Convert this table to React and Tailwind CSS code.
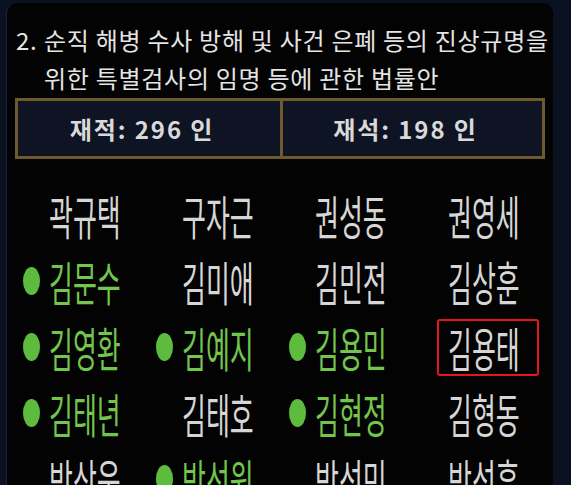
const rows = [
  [['곽규택'], ['구자근'], ['권성동'], ['권영세']],
  [['김문수', 'yes'], ['김미애'], ['김민전'], ['김상훈']],
  [['김영환', 'yes'], ['김예지', 'yes'], ['김용민', 'yes'], ['김용태', 'mark']],
  [['김태년', 'yes'], ['김태호'], ['김현정', 'yes'], ['김형동']],
  [['박상웅'], ['박선원', 'yes'], ['박성민'], ['박성훈']],
]

function NameCell({ name, state }) {
  const voted = state === 'yes'
  return (
    <div className="flex items-center h-[66px]">
      <span className="w-[26px] shrink-0 flex items-center">
        {voted && <span className="w-[17px] h-[28px] rounded-[50%] bg-[#5dbb3d]" />}
      </span>
      {state === 'mark' ? (
        <span className="-ml-[11px] w-[102px] h-[57px] border-2 border-[#e3161d] rounded-[3px] flex items-center pl-[9px]">
          <span className="inline-block scale-y-[1.8] text-[#d6d6d6]">{name}</span>
        </span>
      ) : (
        <span className={`inline-block scale-y-[1.8] ${voted ? 'text-[#72c64c]' : 'text-[#d6d6d6]'}`}>
          {name}
        </span>
      )}
    </div>
  )
}

export default function App() {
  return (
    <div className="w-[571px] h-[485px] overflow-hidden bg-[#0a1120] pl-[6px] pt-[3px] pr-[18px] font-['Noto_Sans_CJK_KR',sans-serif]">
      <div className="h-[600px] bg-[#030303] rounded-t-[10px] border-l border-[#1a2438]">
        <div className="flex pl-[9px] pt-[18px] text-[24px] leading-[38px] text-[#e4e4e4] tracking-[0.03em]">
          <span className="w-[28px] shrink-0">2.</span>
          <div>
            순직 해병 수사 방해 및 사건 은폐 등의 진상규명을
            <br />
            위한 특별검사의 임명 등에 관한 법률안
          </div>
        </div>

        <div className="mx-[8px] mt-[1px] h-[61px] grid grid-cols-2 border-[3px] border-[#6e5a2e] bg-[#0e1424] text-[24px] font-bold tracking-[0.08em] text-[#d9d9d9]">
          <div className="flex items-center justify-center pr-[14px]">재적: 296 인</div>
          <div className="flex items-center justify-center border-l-[3px] border-[#6e5a2e] pr-[14px]">재석: 198 인</div>
        </div>

        <div className="ml-[16px] mt-[23px] w-[532px] grid grid-cols-4 text-[26px] leading-none">
          {rows.flat().map(([name, state], i) => (
            <NameCell key={i} name={name} state={state} />
          ))}
        </div>
      </div>
    </div>
  )
}
